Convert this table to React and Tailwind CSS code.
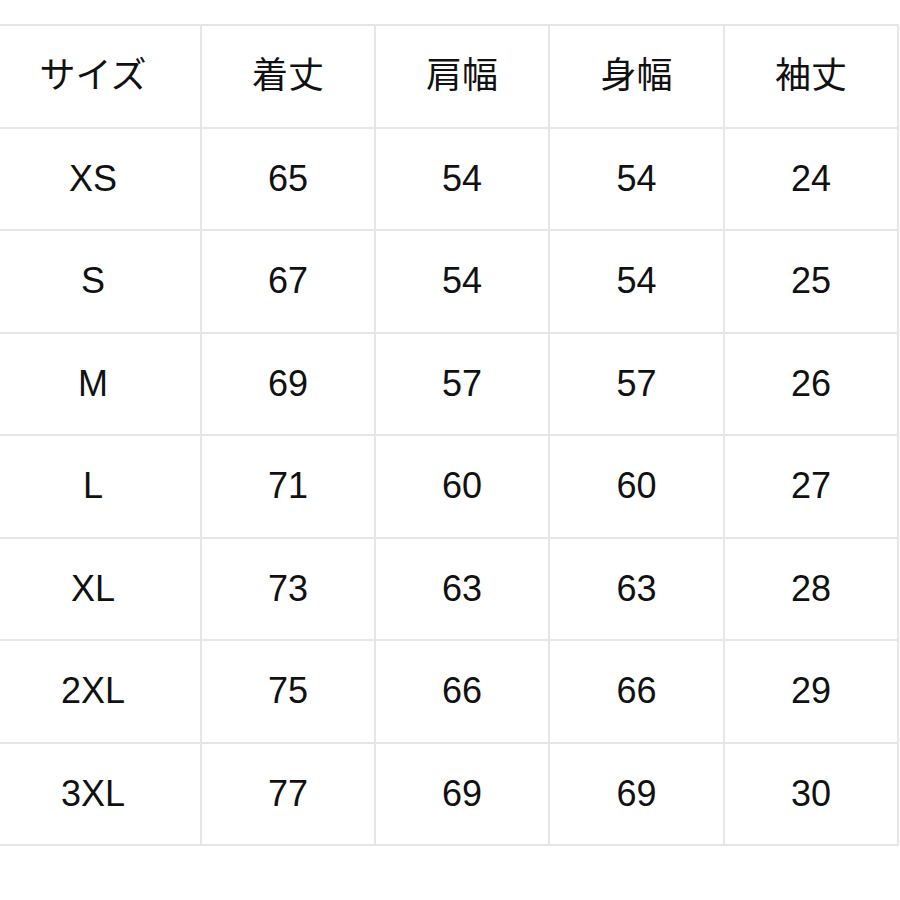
import React from "react";

const header = ["サイズ", "着丈", "肩幅", "身幅", "袖丈"];
const rows = [
  ["XS", "65", "54", "54", "24"],
  ["S", "67", "54", "54", "25"],
  ["M", "69", "57", "57", "26"],
  ["L", "71", "60", "60", "27"],
  ["XL", "73", "63", "63", "28"],
  ["2XL", "75", "66", "66", "29"],
  ["3XL", "77", "69", "69", "30"],
];

export default function App() {
  const all = [header, ...rows];
  return (
    <div
      className="w-[900px] h-[900px] bg-white overflow-hidden pt-[24px]"
      style={{ fontFamily: '"Liberation Sans", "Noto Sans CJK JP", Arial, sans-serif' }}
    >
      <div className="ml-[-16px] w-max grid grid-cols-[214px_172px_172px_173px_172px] auto-rows-[100.5px] gap-[2px] p-[2px] bg-[#e6e6e6]">
        {all.map((r, i) =>
          r.map((c, j) => (
            <div
              key={i + "-" + j}
              className="bg-white flex items-center justify-center text-[36px] text-[#111111] leading-none"
            >
              {c}
            </div>
          ))
        )}
      </div>
    </div>
  );
}
